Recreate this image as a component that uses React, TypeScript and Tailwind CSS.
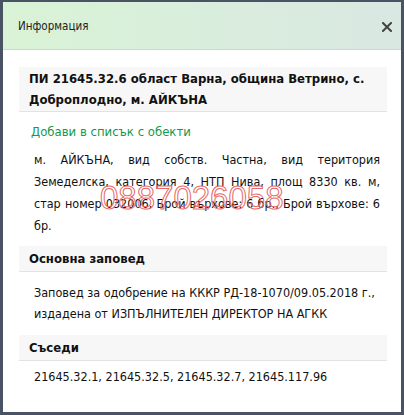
export default function App() {
  return (
    <div className="w-[404px] h-[415px] bg-[#4a5363] pt-[2px] pl-[3px] pr-[3px] font-['DejaVu_Sans_Condensed','Liberation_Sans',sans-serif] text-[12.5px] text-[#111]">
      <div className="relative w-[398px] h-[410px] bg-white flex flex-col">
        {/* Header */}
        <div className="h-[48px] flex items-center justify-between pt-[2px] pl-[15px] pr-[6px] bg-gradient-to-r from-[#d9f3d6] to-[#d9e8e2] border-b border-[#c9d9cf]">
          <span className="text-[11.5px] text-[#222]">Информация</span>
          <button className="w-[16px] h-[16px] flex items-center justify-center text-[#444]">
            <svg width="10" height="10" viewBox="0 0 10 10">
              <path d="M1 1 L9 9 M9 1 L1 9" stroke="#444" strokeWidth="2" strokeLinecap="square" />
            </svg>
          </button>
        </div>

        {/* Body */}
        <div className="pt-[17px] pl-[16px] pr-[14px]">
          <div className="bg-[#f7f7f7] border-b border-[#e3e3e3] px-[10px] py-[1px] font-bold text-[13px] leading-[21px]">
            ПИ 21645.32.6 област Варна, община Ветрино, с. Доброплодно, м. АЙКЪНА
          </div>

          <div className="mt-[9px] pl-[12px] text-[13px] text-[#16984a] leading-[22px]">Добави в списък с обекти</div>

          <p className="mt-[6px] pl-[15px] pr-[7px] text-justify leading-[22px]">
            м. АЙКЪНА, вид собств. Частна, вид територия Земеделска, категория 4, НТП Нива, площ 8330 кв. м, стар номер 032006, Брой върхове: 6 бр., Брой върхове: 6 бр.
          </p>

          <div className="mt-[9px] bg-[#f7f7f7] border-b border-[#e3e3e3] px-[10px] py-[2px] font-bold text-[13px] leading-[21px]">
            Основна заповед
          </div>
          <p className="mt-[10px] pl-[15px] leading-[21px]">
            Заповед за одобрение на КККР РД-18-1070/09.05.2018 г., издадена от ИЗПЪЛНИТЕЛЕН ДИРЕКТОР НА АГКК
          </p>

          <div className="mt-[11px] bg-[#f7f7f7] border-b border-[#e3e3e3] px-[10px] py-[2px] font-bold text-[13px] leading-[21px]">
            Съседи
          </div>
          <p className="mt-[5px] pl-[15px] leading-[21px]">
            21645.32.1, 21645.32.5, 21645.32.7, 21645.117.96
          </p>
        </div>

        {/* Watermark */}
        <div className="absolute left-[97px] top-[179px] font-['Liberation_Sans',sans-serif] text-[33px] leading-none text-transparent [-webkit-text-stroke:1px_#e46a6a] pointer-events-none select-none">
          0887026058
        </div>
      </div>
    </div>
  );
}
